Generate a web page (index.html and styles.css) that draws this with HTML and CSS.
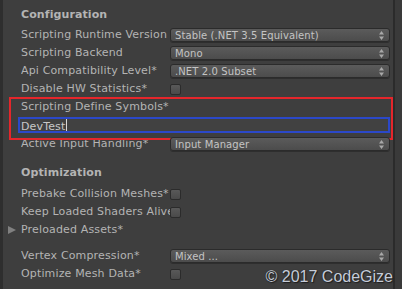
FILE: index.html
```html
<!DOCTYPE html>
<html lang="en">
<head>
    <meta charset="UTF-8">
    <meta name="viewport" content="width=device-width, initial-scale=1.0">
    <title>Player Settings - Other Settings</title>
    <link rel="stylesheet" href="styles.css">
</head>
<body>
    <div class="inspector">
        <div class="panel">
            <div class="section-title">Configuration</div>

            <div class="row">
                <span class="label">Scripting Runtime Version</span>
                <div class="popup">Stable (.NET 3.5 Equivalent)
                    <svg class="arrows" width="5" height="9" viewBox="0 0 5 9"><path d="M2.5 0 L5 3.5 L0 3.5 Z M0 5.5 L5 5.5 L2.5 9 Z"/></svg>
                </div>
            </div>
            <div class="row">
                <span class="label">Scripting Backend</span>
                <div class="popup">Mono
                    <svg class="arrows" width="5" height="9" viewBox="0 0 5 9"><path d="M2.5 0 L5 3.5 L0 3.5 Z M0 5.5 L5 5.5 L2.5 9 Z"/></svg>
                </div>
            </div>
            <div class="row">
                <span class="label">Api Compatibility Level*</span>
                <div class="popup">.NET 2.0 Subset
                    <svg class="arrows" width="5" height="9" viewBox="0 0 5 9"><path d="M2.5 0 L5 3.5 L0 3.5 Z M0 5.5 L5 5.5 L2.5 9 Z"/></svg>
                </div>
            </div>
            <div class="row">
                <span class="label">Disable HW Statistics*</span>
                <span class="checkbox"></span>
            </div>

            <!-- annotated area -->
            <div class="highlight">
                <div class="row">
                    <span class="label wide">Scripting Define Symbols*</span>
                </div>
                <div class="field-row">
                    <div class="textfield">DevTest<span class="caret"></span></div>
                </div>
            </div>

            <div class="row">
                <span class="label">Active Input Handling*</span>
                <div class="popup">Input Manager
                    <svg class="arrows" width="5" height="9" viewBox="0 0 5 9"><path d="M2.5 0 L5 3.5 L0 3.5 Z M0 5.5 L5 5.5 L2.5 9 Z"/></svg>
                </div>
            </div>

            <div class="section-title second">Optimization</div>

            <div class="row">
                <span class="label">Prebake Collision Meshes*</span>
                <span class="checkbox"></span>
            </div>
            <div class="row">
                <span class="label">Keep Loaded Shaders Alive*</span>
                <span class="checkbox"></span>
            </div>
            <div class="row foldout">
                <span class="fold-arrow"></span>
                <span class="label wide">Preloaded Assets*</span>
            </div>

            <div class="row spaced">
                <span class="label">Vertex Compression*</span>
                <div class="popup">Mixed ...
                    <svg class="arrows" width="5" height="9" viewBox="0 0 5 9"><path d="M2.5 0 L5 3.5 L0 3.5 Z M0 5.5 L5 5.5 L2.5 9 Z"/></svg>
                </div>
            </div>
            <div class="row">
                <span class="label">Optimize Mesh Data*</span>
                <span class="checkbox"></span>
            </div>
        </div>
        <div class="scrollbar"></div>
        <div class="watermark">© 2017 CodeGize</div>
    </div>
</body>
</html>
```

FILE: styles.css
```css
body {
    margin: 0;
    background-color: #3e3e3e;
    font-family: 'DejaVu Sans', Verdana, sans-serif;
    font-size: 11px;
    color: #b4b4b4;
}

.inspector {
    position: relative;
    display: flex;
    width: 402px;
    height: 289px;
    overflow: hidden;
    background-color: #3e3e3e;
    border-left: 3px solid #2e2e2e;
    box-sizing: border-box;
}

.panel {
    flex: 1;
    padding-top: 6px;
    padding-right: 3px;
}

.section-title {
    height: 18px;
    line-height: 18px;
    padding-left: 18px;
    font-weight: bold;
    letter-spacing: 0.1px;
    margin-bottom: 2px;
}

.section-title.second {
    margin-top: 11px;
    margin-bottom: 3px;
}

.row {
    display: flex;
    align-items: center;
    height: 18px;
    padding-left: 18px;
}

.row.spaced {
    margin-top: 8px;
}

.label {
    width: 149px;
    flex-shrink: 0;
    white-space: nowrap;
    overflow: hidden;
    line-height: 18px;
    letter-spacing: 0.15px;
}

.label.wide {
    width: auto;
    overflow: visible;
}

.popup {
    position: relative;
    flex: 1;
    height: 14px;
    line-height: 13px;
    box-sizing: border-box;
    padding-left: 4px;
    font-size: 10px;
    letter-spacing: 0.1px;
    color: #c4c4c4;
    background: linear-gradient(#5b5b5b, #4c4c4c);
    border: 1px solid #2b2b2b;
    border-radius: 3px;
    box-shadow: 0 1px 0 rgba(0, 0, 0, 0.25);
}

.arrows {
    position: absolute;
    right: 5px;
    top: 2px;
    fill: #a8a8a8;
}

.checkbox {
    width: 11px;
    height: 11px;
    box-sizing: border-box;
    background: linear-gradient(#595959, #4a4a4a);
    border: 1px solid #2b2b2b;
    border-radius: 2px;
}

.highlight {
    position: relative;
}

.highlight::before {
    content: "";
    position: absolute;
    left: 6px;
    right: -3px;
    top: -1px;
    bottom: -5px;
    border: 2px solid #e5262b;
    pointer-events: none;
}

.field-row {
    height: 18px;
    padding-left: 15px;
}

.textfield {
    margin-top: 1px;
    height: 16px;
    line-height: 12px;
    box-sizing: border-box;
    padding-left: 1px;
    letter-spacing: 0.15px;
    color: #c8c8c8;
    background-color: #414141;
    border: 2px solid #2b48c8;
}

.caret {
    display: inline-block;
    width: 1px;
    height: 12px;
    margin-left: 1px;
    vertical-align: -1px;
    background-color: #d8d8d8;
}

.foldout {
    padding-left: 5px;
}

.fold-arrow {
    width: 0;
    height: 0;
    margin-right: 5px;
    border-top: 4px solid transparent;
    border-bottom: 4px solid transparent;
    border-left: 8px solid #808080;
}

.scrollbar {
    width: 9px;
    flex-shrink: 0;
    background-color: #3a3a3a;
    border-left: 2px solid #2b2b2b;
    box-sizing: border-box;
}

.watermark {
    position: absolute;
    right: 9px;
    top: 268px;
    font-family: 'Liberation Sans', Arial, sans-serif;
    font-size: 16px;
    line-height: 18px;
    color: #c6ccd8;
    text-shadow: 0 0 1px #1e1e1e, 1px 1px 1px #1e1e1e;
    white-space: nowrap;
}
```
